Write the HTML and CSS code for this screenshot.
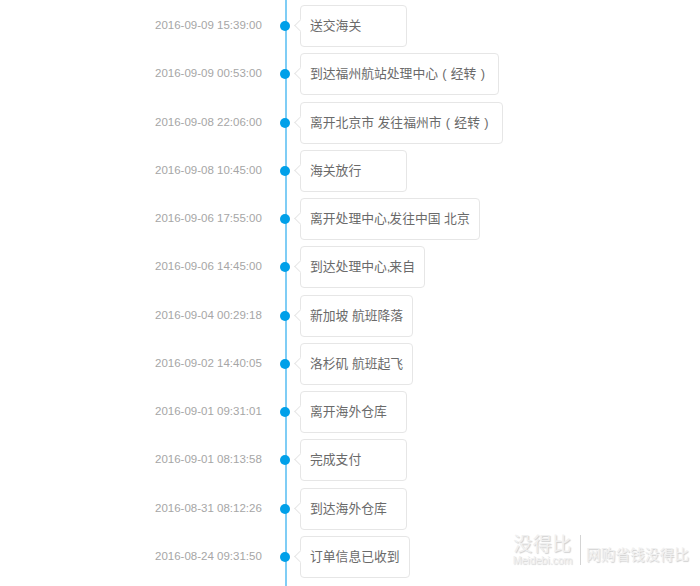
FILE: index.html
```html
<!DOCTYPE html>
<html lang="zh">
<head>
<meta charset="utf-8">
<title>物流跟踪</title>
<link rel="stylesheet" href="styles.css">
</head>
<body>
<div class="timeline">
  <div class="row"><span class="time">2016-09-09 15:39:00</span><span class="dot"></span><div class="box"><span>送交海关</span></div></div>
  <div class="row"><span class="time">2016-09-09 00:53:00</span><span class="dot"></span><div class="box"><span>到达福州航站处理中心<span class="paren">(</span>经转<span class="paren">)</span></span></div></div>
  <div class="row"><span class="time">2016-09-08 22:06:00</span><span class="dot"></span><div class="box"><span>离开北京市 发往福州市<span class="paren">(</span>经转<span class="paren">)</span></span></div></div>
  <div class="row"><span class="time">2016-09-08 10:45:00</span><span class="dot"></span><div class="box"><span>海关放行</span></div></div>
  <div class="row"><span class="time">2016-09-06 17:55:00</span><span class="dot"></span><div class="box"><span>离开处理中心<span class="comma">,</span>发往中国 北京</span></div></div>
  <div class="row"><span class="time">2016-09-06 14:45:00</span><span class="dot"></span><div class="box"><span>到达处理中心<span class="comma">,</span>来自</span></div></div>
  <div class="row"><span class="time">2016-09-04 00:29:18</span><span class="dot"></span><div class="box"><span>新加坡 航班降落</span></div></div>
  <div class="row"><span class="time">2016-09-02 14:40:05</span><span class="dot"></span><div class="box"><span>洛杉矶 航班起飞</span></div></div>
  <div class="row"><span class="time">2016-09-01 09:31:01</span><span class="dot"></span><div class="box"><span>离开海外仓库</span></div></div>
  <div class="row"><span class="time">2016-09-01 08:13:58</span><span class="dot"></span><div class="box"><span>完成支付</span></div></div>
  <div class="row"><span class="time">2016-08-31 08:12:26</span><span class="dot"></span><div class="box"><span>到达海外仓库</span></div></div>
  <div class="row"><span class="time">2016-08-24 09:31:50</span><span class="dot"></span><div class="box"><span>订单信息已收到</span></div></div>
</div>
<div class="mark">
  <div class="mark-brand"><span class="mark-name">没得比</span><span class="mark-url">Meidebi.com</span></div>
  <span class="mark-slogan">网购省钱没得比</span>
</div>
</body>
</html>
```
FILE: styles.css
```css
* { box-sizing: border-box; }
html, body { margin: 0; height: 586px; overflow: hidden; background: #fff; }
body { font-family: "Liberation Sans", "Noto Sans CJK SC", sans-serif; position: relative; }
.timeline {
  position: relative;
  padding: 5px 0 0 155px;
  display: flex;
  flex-direction: column;
  gap: 6.25px;
}
.timeline::before {
  content: "";
  position: absolute;
  left: 284.5px;
  top: 0;
  width: 2px;
  height: 586px;
  background: #7fcdf5;
}
.row { display: flex; align-items: center; position: relative; height: 42px; }
.time { width: 107px; font-size: 11.5px; line-height: 14px; padding-bottom: 2px; color: #a6a6a6; white-space: nowrap; }
.dot {
  width: 10px;
  height: 10px;
  margin-left: 18px;
  border-radius: 50%;
  background: #00a0e9;
  position: relative;
}
.box {
  position: relative;
  margin-left: 10px;
  height: 42px;
  min-width: 107px;
  padding: 0 9px 3px;
  display: flex;
  align-items: center;
  border: 1px solid #e6e6e6;
  border-radius: 4px;
  background: #fff;
  font-size: 12.8px;
  color: #6a6a6a;
  white-space: nowrap;
}
.box::before {
  content: "";
  position: absolute;
  left: -5px;
  top: 15px;
  width: 8px;
  height: 8px;
  background: #fff;
  border-left: 1px solid #e6e6e6;
  border-bottom: 1px solid #e6e6e6;
  transform: rotate(45deg);
}
.paren { display: inline-block; width: 12.8px; text-align: center; }
.comma { margin-right: -1px; }
.mark {
  position: absolute;
  left: 514px;
  top: 535px;
  display: flex;
  align-items: center;
  color: #f0f0f0;
  text-shadow: 1px 1px 1px #cfcfcf;
}
.mark-brand {
  display: flex;
  flex-direction: column;
  align-items: center;
  width: 67px;
  height: 30px;
  padding-right: 9px;
  border-right: 1px solid #d4d4d4;
}
.mark-name { font-size: 19px; line-height: 20px; letter-spacing: 0.5px; white-space: nowrap; }
.mark-url { font-size: 10.5px; line-height: 10px; white-space: nowrap; }
.mark-slogan { font-size: 14.7px; margin-left: 5px; padding-top: 6px; white-space: nowrap; }
```
